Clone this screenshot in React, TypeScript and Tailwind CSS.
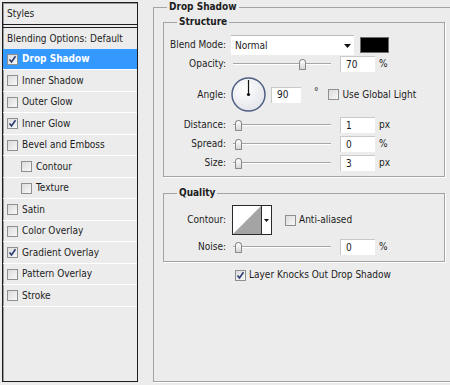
import React from "react";

type Item = { label: string; checked?: boolean; selected?: boolean; indent?: boolean; h: string };

const items: Item[] = [
  { label: "Drop Shadow", checked: true, selected: true, h: "h-[21px]" },
  { label: "Inner Shadow", h: "h-[22px]" },
  { label: "Outer Glow", h: "h-[21px]" },
  { label: "Inner Glow", checked: true, h: "h-[22px]" },
  { label: "Bevel and Emboss", h: "h-[21px]" },
  { label: "Contour", indent: true, h: "h-[22px]" },
  { label: "Texture", indent: true, h: "h-[21px]" },
  { label: "Satin", h: "h-[22px]" },
  { label: "Color Overlay", h: "h-[21px]" },
  { label: "Gradient Overlay", checked: true, h: "h-[22px]" },
  { label: "Pattern Overlay", h: "h-[21px]" },
  { label: "Stroke", h: "h-[22px]" },
];

const Checkbox = ({ checked }: { checked?: boolean }) => (
  <div className="w-[11px] h-[11px] shrink-0 border border-[#8e8f8f] bg-gradient-to-br from-[#dcdcdc] to-[#f8f8f8] flex items-center justify-center">
    {checked && (
      <svg width="9" height="9" viewBox="0 0 9 9">
        <path d="M1.5 4.5 L3.5 7 L7.5 1.2" fill="none" stroke="#2b3a73" strokeWidth="1.6" />
      </svg>
    )}
  </div>
);

const Track = ({ w }: { w: string }) => (
  <div className={`${w} h-[2px] border-t border-[#a6a6a6] bg-white`} />
);

const Thumb = () => (
  <div className="w-[7px] h-[11px] shrink-0 rounded-t-[4px] rounded-b-[1px] border border-[#8a8a8a] bg-gradient-to-b from-white to-[#d6d6d6]" />
);

const Field = ({ value, w = "w-[35px]" }: { value: string; w?: string }) => (
  <div className={`${w} h-[16px] bg-white border-t border-l border-[#c9c9c9] pl-[5px] flex items-center text-[#1a1a1a]`}>
    {value}
  </div>
);

const Label = ({ text }: { text: string }) => (
  <div className="w-[62px] text-right shrink-0 whitespace-nowrap">{text}</div>
);

const SliderRow = ({ label, value, unit, mt }: { label: string; value: string; unit: string; mt: string }) => (
  <div className={`flex items-center h-[16px] ${mt}`}>
    <Label text={label} />
    <div className="ml-[7px] flex items-center">
      <Track w="w-[2px]" />
      <Thumb />
      <Track w="w-[89px]" />
    </div>
    <div className="ml-[9px]">
      <Field value={value} />
    </div>
    <div className="ml-[4px]">{unit}</div>
  </div>
);

export default function App() {
  return (
    <div className="w-[450px] h-[385px] bg-[#ececec] overflow-hidden flex items-start font-['DejaVu_Sans_Condensed','Liberation_Sans',sans-serif] text-[10px] text-[#1c1c1c] leading-[12px] whitespace-nowrap">
      {/* Styles list */}
      <div className="ml-[2px] mt-[2px] w-[136px] h-[380px] shrink-0 border border-[#1e1e1e] shadow-[inset_1px_1px_0_#9a9a9a] flex flex-col">
        <div className="h-[21px] pl-[4px] flex items-center">Styles</div>
        <div className="h-[4px] border-t border-b border-[#1e1e1e]" />
        <div className="h-[21px] pl-[4px] flex items-center">Blending Options: Default</div>
        {items.map((it) => (
          <div
            key={it.label}
            className={`${it.h} flex items-center gap-[4px] border-b border-white ${
              it.indent ? "pl-[18px]" : "pl-[4px]"
            } ${it.selected ? "bg-[#3399ff] text-white font-bold" : ""}`}
          >
            <Checkbox checked={it.checked} />
            <span>{it.label}</span>
          </div>
        ))}
      </div>

      {/* Drop Shadow panel */}
      <fieldset className="ml-[15px] w-[300px] h-[382px] shrink-0 border border-[#a3a3a3] shadow-[1px_1px_0_#ffffff]">
        <legend className="ml-[13px] px-[2px] font-bold leading-[14px]">Drop Shadow</legend>
        <div className="pl-[9px]">
          <fieldset className="mt-[1px] w-[282px] border border-[#a3a3a3] shadow-[1px_1px_0_#ffffff] pb-[5px]">
            <legend className="ml-[13px] px-[2px] font-bold leading-[14px]">Structure</legend>
            <div className="flex items-center h-[20px] mt-[6px]">
              <Label text="Blend Mode:" />
              <div className="ml-[5px] w-[123px] h-[20px] bg-white border-t border-[#bdbdbd] pl-[4px] flex items-center justify-between">
                <span>Normal</span>
                <svg width="7" height="4" viewBox="0 0 7 4" className="mr-[3px]">
                  <path d="M0 0 H7 L3.5 4 Z" fill="#111" />
                </svg>
              </div>
              <div className="ml-[6px] w-[29px] h-[16px] bg-black border border-[#6d6d6d]" />
            </div>
            <div className="flex items-center h-[16px] mt-[1px]">
              <Label text="Opacity:" />
              <div className="ml-[7px] flex items-center">
                <Track w="w-[66px]" />
                <Thumb />
                <Track w="w-[25px]" />
              </div>
              <div className="ml-[9px]">
                <Field value="70" />
              </div>
              <div className="ml-[4px]">%</div>
            </div>
            <div className="flex items-center h-[35px] mt-[5px]">
              <Label text="Angle:" />
              <svg width="35" height="35" viewBox="0 0 35 35" className="ml-[5px]">
                <defs>
                  <radialGradient id="dial" cx="40%" cy="35%" r="70%">
                    <stop offset="0" stopColor="#ffffff" />
                    <stop offset="1" stopColor="#e2e4ea" />
                  </radialGradient>
                </defs>
                <circle cx="17.5" cy="17.5" r="16.5" fill="url(#dial)" stroke="#4f5f82" strokeWidth="1.5" />
                <line x1="17.5" y1="17.5" x2="17.5" y2="3" stroke="#111" strokeWidth="1.2" />
                <circle cx="17.5" cy="17.5" r="1.6" fill="#111" />
              </svg>
              <div className="ml-[5px]">
                <Field value="90" w="w-[30px]" />
              </div>
              <div className="ml-[13px] self-start mt-[9px]">°</div>
              <div className="ml-[9px]">
                <Checkbox />
              </div>
              <div className="ml-[4px]">Use Global Light</div>
            </div>
            <SliderRow label="Distance:" value="1" unit="px" mt="mt-[5px]" />
            <SliderRow label="Spread:" value="0" unit="%" mt="mt-[3px]" />
            <SliderRow label="Size:" value="3" unit="px" mt="mt-[3px]" />
          </fieldset>

          <fieldset className="mt-[9px] w-[282px] border border-[#a3a3a3] shadow-[1px_1px_0_#ffffff] pb-[6px]">
            <legend className="ml-[13px] px-[2px] font-bold leading-[14px]">Quality</legend>
            <div className="flex items-center h-[30px] mt-[5px]">
              <Label text="Contour:" />
              <div className="ml-[6px] w-[40px] h-[30px] border border-[#2a2a2a] bg-white flex">
                <svg width="28" height="28" viewBox="0 0 28 28">
                  <path d="M0 28 L28 0 L28 28 Z" fill="#a4a4a4" />
                </svg>
                <div className="flex-1 border-l border-[#2a2a2a] flex items-center justify-center">
                  <svg width="5" height="3" viewBox="0 0 5 3">
                    <path d="M0 0 H5 L2.5 3 Z" fill="#111" />
                  </svg>
                </div>
              </div>
              <div className="ml-[13px]">
                <Checkbox />
              </div>
              <div className="ml-[3px]">Anti-aliased</div>
            </div>
            <SliderRow label="Noise:" value="0" unit="%" mt="mt-[4px]" />
          </fieldset>

          <div className="flex items-center h-[16px] mt-[5px] ml-[72px]">
            <Checkbox checked />
            <div className="ml-[3px]">Layer Knocks Out Drop Shadow</div>
          </div>
        </div>
      </fieldset>
    </div>
  );
}
